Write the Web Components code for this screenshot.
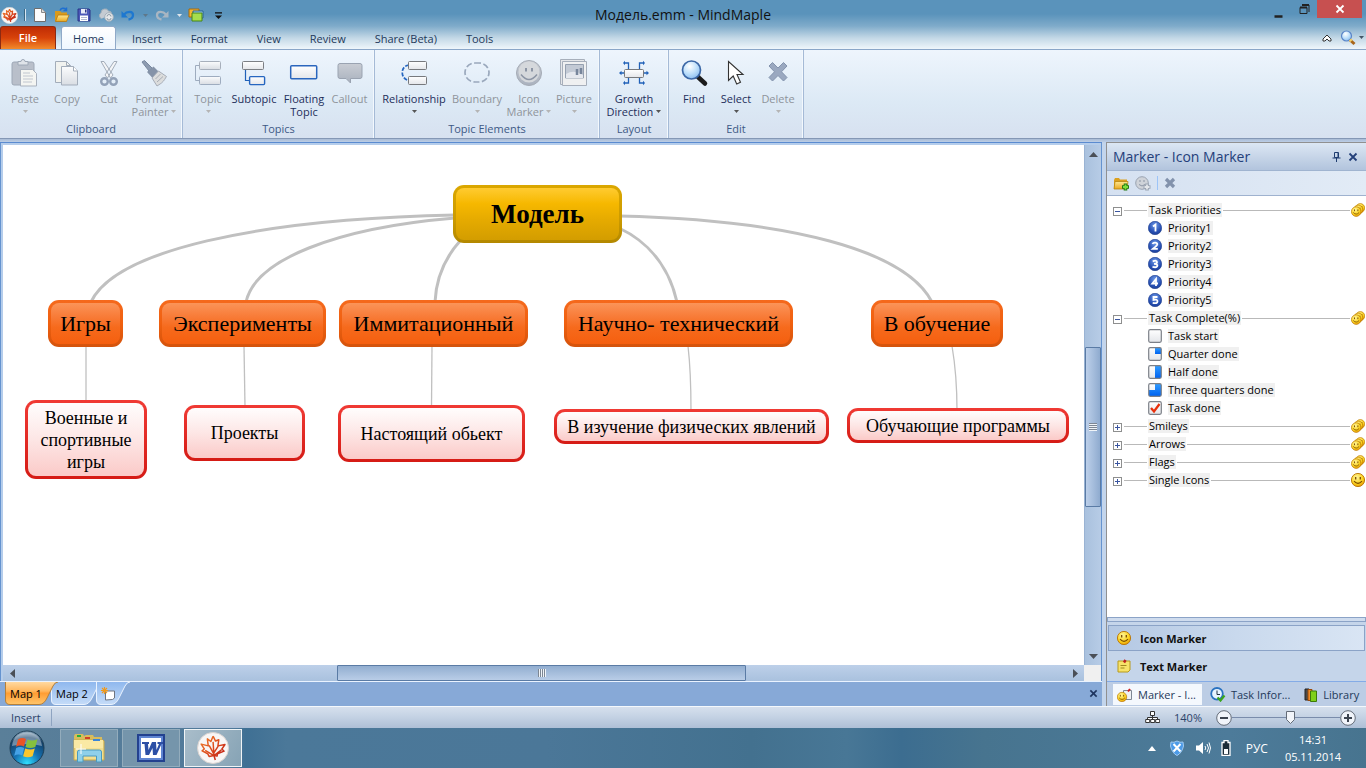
<!DOCTYPE html>
<html lang="ru">
<head>
<meta charset="utf-8">
<title>Модель.emm - MindMaple</title>
<style>
  html, body { margin: 0; height: 100%; }
  body { font: 11px/13px "Open Sans", "Noto Sans", sans-serif; color: #1e395b; overflow: hidden; }
</style>
</head>
<body>
<mm-app></mm-app>

<script>
const define = (name, html, setup) => {
  const tpl = document.createElement('template');
  tpl.innerHTML = html;
  customElements.define(name, class extends HTMLElement {
    constructor() {
      super();
      this.attachShadow({ mode: 'open' }).append(tpl.content.cloneNode(true));
    }
    connectedCallback() {
      if (setup && !this.ready) { this.ready = true; setup(this, this.shadowRoot); }
    }
  });
};

/* ---------- icons ---------- */
const DEFS = `<defs>
<linearGradient id="gy" x2="0" y2="1"><stop stop-color="#fbfcfd"/><stop offset="1" stop-color="#d9dde3"/></linearGradient>
<linearGradient id="wh" x2="0" y2="1"><stop stop-color="#fff"/><stop offset="1" stop-color="#e4e6ea"/></linearGradient>
<linearGradient id="gr" x2="0" y2="1"><stop stop-color="#c9cdd4"/><stop offset="1" stop-color="#a9b1be"/></linearGradient>
<linearGradient id="fo" x2="0" y2="1"><stop stop-color="#ffe892"/><stop offset="1" stop-color="#e9a820"/></linearGradient>
<linearGradient id="bl" x2="0" y2="1"><stop stop-color="#2f9bff"/><stop offset="1" stop-color="#0062f0"/></linearGradient>
<linearGradient id="lf" x2="1" y2="1"><stop stop-color="#f0802a"/><stop offset=".5" stop-color="#dc4a1c"/><stop offset="1" stop-color="#b81414"/></linearGradient>
<radialGradient id="sm" cx=".4" cy=".3" r=".8"><stop stop-color="#fff59a"/><stop offset=".6" stop-color="#fbd11c"/><stop offset="1" stop-color="#e08a00"/></radialGradient>
<radialGradient id="nb" cx=".5" cy=".3" r=".8"><stop stop-color="#6f9be8"/><stop offset=".6" stop-color="#2750b4"/><stop offset="1" stop-color="#1b3a8c"/></radialGradient>
<radialGradient id="ln" cx=".4" cy=".3" r=".8"><stop stop-color="#fff"/><stop offset=".5" stop-color="#bfe0fb"/><stop offset="1" stop-color="#7fb6ee"/></radialGradient>
<radialGradient id="or" cx=".5" cy=".95" r=".95"><stop stop-color="#2fe0ff"/><stop offset=".4" stop-color="#1673b4"/><stop offset=".8" stop-color="#123e66"/><stop offset="1" stop-color="#9fb8ca"/></radialGradient>
</defs>`;
const smile = (x, y, r) => `<g transform="translate(${x} ${y}) scale(${r / 7})"><circle r="6.6" fill="url(#sm)" stroke="#b97400" stroke-width="0.9"/><path d="M-2.3-3v2.4M2.3-3v2.4" stroke="#7a4a00" stroke-width="1.3"/><path d="M-4 1.2Q0 5.6 4 1.2" fill="none" stroke="#7a4a00" stroke-width="1.1"/></g>`;
const leaf = w => `<path d="M16 2.500L18.800 8 22.500 6.500 21.500 13.500 29.500 12 26 17 28.500 19.500 21 22.500 20.500 25 17 24.500 18.500 29.500M16 2.500L13.500 8.500 9.500 5.500 10.500 13.500 2.500 11.500 6 17 3.500 19 10 22.500 11.500 25.500 17 24.500M17 24.500L16 9M16.500 22L11.500 13M16.500 22L22 13.500M17 24.500L7 18.500M17 24.500L25.500 18" fill="none" stroke="url(#lf)" stroke-width="${w}" stroke-linejoin="round"/>`;
const num = d => `<circle cx="7" cy="7" r="6.700" fill="url(#nb)" stroke="#1b3a8c" stroke-width=".6"/><path d="${d}" fill="none" stroke="#fff" stroke-width="1.800"/>`;
const box = i => `<rect x=".7" y=".7" width="12.600" height="12.600" rx="1.500" fill="url(#wh)"/>${i}<rect x=".7" y=".7" width="12.600" height="12.600" rx="1.500" fill="none" stroke="#7c8088" stroke-width="1.200"/>`;
const disc = '<circle cx="16" cy="16" r="15.500" fill="#f8f6f5" stroke="#d9d3d0"/>';
const ICONS = {
  leaf: [32, 32, disc + `<g transform="translate(2 2) scale(.88)">${leaf(1.7)}</g>`],
  logo: [32, 32, disc + `<g transform="translate(2 2) scale(.88)">${leaf(2.6)}</g>`],
  newdoc: [14, 16, `<path d="M1.500 1.500h7l4 4v9h-11z" fill="#fcfcfc" stroke="#6d6d6d"/><path d="M8.500 1.500v4h4" fill="#ddd" stroke="#888"/>`],
  open: [16, 16, `<path d="M1 14V4h5l1.500 1.500H13V14z" fill="#d99a1c"/><path d="M1.500 14.500L4 8h11l-2.500 6.500z" fill="url(#fo)" stroke="#b8780c" stroke-width=".8"/><path d="M6 3.500C7 1 10 .5 12 2.500M12.500 .5v3h-3" fill="none" stroke="#1f6fd0" stroke-width="1.500"/>`],
  save: [14, 14, `<path d="M1 1h11l1 1v11H1z" fill="#4b58b8" stroke="#2a3488"/><path d="M4 1h6v4.500H4z" fill="#e8ecf8"/><path d="M8 1.500h1.500V4.500H8z" fill="#2a3488"/><path d="M3 7.500h8V13H3z" fill="#fff"/><path d="M4 9.500h6M4 11.500h6" stroke="#9aa6c8" stroke-width=".8"/>`],
  cloud: [16, 14, `<path d="M4 10.500H3.500A3 3 0 0 1 3 5 4 4 0 0 1 10.500 3a3 3 0 0 1 3 3" fill="#c5cbd2" stroke="#a3b0bb"/><circle cx="11" cy="9" r="4.300" fill="#e6e8ea" stroke="#a3b0bb"/><path d="M9 8.500a2 2 0 0 1 4 0M13 10a2 2 0 0 1-4 0" fill="none" stroke="#8e9ba7"/>`],
  undo: [14, 12, `<path d="M3 5.500C6 2 12 2 12 6c0 3-2 4-4.500 4.500" fill="none" stroke="#1e78d0" stroke-width="2.300"/><path d="M.5 2v6.500H7z" fill="#1e78d0"/>`],
  redo: [14, 12, `<path d="M11 5.500C8 2 2 2 2 6c0 3 2 4 4.500 4.500" fill="none" stroke="#a9b6c2" stroke-width="2.300"/><path d="M13.500 2v6.500H7z" fill="#a9b6c2"/>`],
  layers: [16, 14, `<path d="M1 1h10v8H1z" fill="#f5b431" stroke="#a56a0e"/><path d="M5 3h10v7H5z" fill="#9fd0ef" stroke="#28648f"/><path d="M4 5h10v8H4z" fill="#a6dd4d" stroke="#47861b"/>`],
  down: [7, 4, `<path d="M0 0h7L3.500 4z" fill="currentColor"/>`],
  more: [8, 8, `<path d="M0 1h8" stroke="#111" stroke-width="1.500"/><path d="M0 4h8L4 8z" fill="#111"/>`],
  min: [9, 3, `<path d="M.5 1.500h8" stroke="#222" stroke-width="2.500"/>`],
  restore: [11, 11, `<path d="M3 1h7v7M1 3.500h7V9.500H1z" fill="none" stroke="#222"/><path d="M1 3.500h7M3 1h7" stroke="#222" stroke-width="2"/>`],
  close: [10, 10, `<path d="M1.500 1.500l7 7m0-7l-7 7" stroke="currentColor" stroke-width="1.800"/>`],
  chev: [10, 8, `<path d="M1 5l4-4 4 4v2H7L5 5 3 7H1z" fill="#fff" stroke="#333"/>`],
  find: [16, 16, `<circle cx="6.500" cy="6" r="5" fill="url(#ln)" stroke="#5b86c8" stroke-width="1.200"/><path d="M10 10l4.500 4" stroke="#a8651a" stroke-width="3"/><path d="M10 9.500l1.500 1.500" stroke="#f2d16a" stroke-width="3"/>`],
  paste: [30, 30, `<rect x="2" y="3" width="22" height="23" rx="2" fill="#b9bfca" stroke="#9ea8b6"/><path d="M8 5V2.500h3a2 2 0 0 1 4 0h3V6H8z" fill="#dfe3e9" stroke="#9ea8b6"/><path d="M10.500 10.500h12l4 4V27h-16z" fill="#f4f5f2" stroke="#a9b1bd"/><path d="M13 14h7M13 17h10M13 20h10M13 23h9" stroke="#c0c6cf"/>`],
  copy: [30, 30, `<path d="M3.500 2.500h11l4 4v17h-15z" fill="#f1f2ef" stroke="#a3adba"/><path d="M14.500 2.500v4h4" fill="none" stroke="#a3adba"/><path d="M9.500 7.500h12l4 4.500v14h-16z" fill="url(#gy)" stroke="#a3adba"/><path d="M21.500 7.500V12h4" fill="#fff" stroke="#a3adba"/>`],
  cut: [30, 30, `<path d="M7 2.500l9.500 16.500 2.500-3L10 2.500zM23 2.500l-9.500 16.500-2.500-3L20 2.500z" fill="#f4f5f7" stroke="#a3adba"/><circle cx="10.500" cy="22.500" r="3.300" fill="none" stroke="#93a2b8" stroke-width="2.400"/><circle cx="19.500" cy="22.500" r="3.300" fill="none" stroke="#93a2b8" stroke-width="2.400"/>`],
  brush: [30, 30, `<path d="M3 3l2.500-1.500L13 9l-3 3z" fill="#8d9bb0" stroke="#7888a0"/><path d="M8 13l6.500-5.500 5 5-6 6.500z" fill="#8593a8"/><path d="M13 19l6.500-7 8 5.500c-1.500 2-2 4-5 6.500-2 1.500-3 2-4.500 3z" fill="#dcdddd" stroke="#a6adb8"/><path d="M16.500 20l5-5M18 23l6-5.500" stroke="#a9aeb6"/>`],
  topic: [30, 30, `<path d="M7 6.500H2.500v15H7" fill="none" stroke="#9eacbf"/><rect x="6.500" y="2.500" width="21" height="8" rx="1" fill="url(#gy)" stroke="#a7afbb"/><rect x="6.500" y="17.500" width="21" height="8" rx="1" fill="url(#gy)" stroke="#9eacbf"/>`],
  subtopic: [30, 30, `<path d="M6.500 11v10.500H10" fill="none" stroke="#2161b8" stroke-width="1.200"/><rect x="3.500" y="2.500" width="21" height="8" rx="1" fill="url(#wh)" stroke="#7c7f84"/><rect x="10.600" y="17.600" width="15" height="8" rx="1" fill="url(#wh)" stroke="#2666c0" stroke-width="1.400"/>`],
  floating: [30, 30, `<rect x="1.700" y="6.700" width="26" height="13" rx="1" fill="url(#wh)" stroke="#2b66bd" stroke-width="1.500"/>`],
  callout: [30, 30, `<path d="M5 4.500h20a2 2 0 0 1 2 2v11a2 2 0 0 1-2 2h-9.500v4.500L11 19.500H5a2 2 0 0 1-2-2v-11a2 2 0 0 1 2-2z" fill="url(#gr)" stroke="#9aa3b1"/>`],
  relationship: [30, 30, `<path d="M10 6C1 7 1 20 10 21.500" fill="none" stroke="#2666c0" stroke-width="1.700" stroke-dasharray="4 1.500"/><rect x="9.500" y="2.500" width="18" height="8" rx="1" fill="url(#wh)" stroke="#77797d"/><rect x="9.500" y="17.500" width="18" height="8" rx="1" fill="url(#wh)" stroke="#77797d"/>`],
  boundary: [30, 30, `<rect x="3" y="4" width="24" height="19" rx="10" fill="none" stroke="#9aa8bc" stroke-width="1.700" stroke-dasharray="6 2.500"/>`],
  smiley: [30, 30, `<circle cx="15" cy="14" r="12.500" fill="url(#gr)" stroke="#a5abb5"/><circle cx="15" cy="13" r="10.500" fill="#d5d8dc"/><path d="M12 9v3.500M18 9v3.500" stroke="#8c95a5" stroke-width="2"/><path d="M7 15.500q8 10 16 0" fill="none" stroke="#8c95a5" stroke-width="1.500"/>`],
  picture: [30, 30, `<path d="M1.500.5h24v25h-24z" fill="#e5e7ea" stroke="#a7afbb"/><path d="M3.500 2.500h24v24h-24z" fill="#eff0f1" stroke="#a7afbb"/><path d="M6.500 5.500h18V19h-18z" fill="#c3cad5" stroke="#95a0b0"/><path d="M7 15q8-5 17 1v3H7z" fill="#e5e8ee"/><path d="M18 10v6M22 9v6" stroke="#77859b" stroke-width="2.500"/>`],
  growth: [32, 30, `<path d="M10.500 10V4H6M21.500 10V4H26M10.500 19v5H6M21.500 19v5H26M6 14H2M26 14h4" fill="none" stroke="#2161b8" stroke-width="1.300"/><path d="M7 1.800L5 4l2 2.200zM25 1.800L27 4l-2 2.200zM7 21.800L5 24l2 2.200zM25 21.800l2 2.200-2 2.200zM3.500 11.800L1 14l2.500 2.200zM28.500 11.800L31 14l-2.500 2.200z" fill="#2161b8"/><rect x="6.500" y="10.500" width="19" height="8" rx="1" fill="url(#wh)" stroke="#77797d"/>`],
  bigfind: [30, 30, `<path d="M19 18l7 6.500" stroke="#1b1b1b" stroke-width="4.500" stroke-linecap="round"/><circle cx="12.500" cy="11" r="9" fill="url(#ln)" stroke="#3b67a6" stroke-width="1.700"/>`],
  select: [30, 30, `<path d="M7.500 2.500v19l4.700-4.500 3.500 8 3.800-1.700-3.500-7.800h6z" fill="#fff" stroke="#333" stroke-width="1.100"/>`],
  delete: [30, 30, `<path d="M6 7l3.500-3.500L15 9l5.500-5.500L24 7l-5.500 5.800L24 18.500 20.500 22 15 16.500 9.500 22 6 18.500l5.500-5.700z" fill="#9aa8c0" stroke="#8393ad"/>`],
  pin: [9, 10, `<path d="M2.500.5h4v5h-4zM.5 6h8M4.500 6V10" fill="none" stroke="#1f3d70"/><path d="M6 1v4.500" stroke="#1f3d70"/>`],
  addfolder: [17, 15, `<path d="M1 13V4l1-2h4l1 1.500h7V13z" fill="#dba01f"/><path d="M1 13l1-7.500h13L14 13z" fill="url(#fo)" stroke="#b8850c" stroke-width=".8"/><path d="M12.500 7.500v7M9 11h7" stroke="#237a12" stroke-width="3.600"/><path d="M12.500 8.500v5M10 11h5" stroke="#7ede3c" stroke-width="1.800"/>`],
  addsmile: [17, 15, `<circle cx="7" cy="7" r="6.300" fill="#cfd3d9" stroke="#9aa3b1"/><path d="M5 4v2M9 4v2M4 8.500q3 3 6 0" fill="none" stroke="#8c95a5"/><path d="M12 7.500v7M8.500 11h7" stroke="#9aa3b1" stroke-width="3.600"/><path d="M12 8.500v5M9.500 11h5" stroke="#e3e6ea" stroke-width="1.800"/>`],
  graydel: [12, 12, `<path d="M2 2l8 8m0-8l-8 8" stroke="#8292ac" stroke-width="3.200"/>`],
  n1: [14, 14, num('M5 5.500L7.500 3.500V10.500')],
  n2: [14, 14, num('M4.500 5Q5 3.700 7 3.700 9.300 3.700 9.300 5.300 9.300 6.500 5 9.800H9.800')],
  n3: [14, 14, num('M4.700 4.300Q9 2.800 9 5.200 9 6.800 6 6.800 9.400 6.800 9.400 8.600 9.400 11 4.500 9.900')],
  n4: [14, 14, num('M8 11V4L4.300 8.500H10')],
  n5: [14, 14, num('M9.500 4H5.500V6.800Q9.500 6 9.500 8.300 9.500 11 4.700 9.900')],
  b0: [14, 14, box('')],
  b1: [14, 14, box('<path d="M7 1h6v6H7z" fill="url(#bl)"/>')],
  b2: [14, 14, box('<path d="M7 1h6v12H7z" fill="url(#bl)"/>')],
  b3: [14, 14, box('<path d="M7 1h6v12H1V7h6z" fill="url(#bl)"/>')],
  b4: [14, 14, box('<path d="M3 7l3 3.500L11.500 3" fill="none" stroke="#e8300c" stroke-width="2.300"/>')],
  smile: [14, 14, smile(7, 7, 7)],
  smiles: [14, 14, smile(9.300, 5, 4.700) + smile(7.300, 6.700, 4.900) + smile(5.200, 8.600, 5.100)],
  note: [14, 14, `<path d="M1 2h12v9l-2 2H1z" fill="#f7e36a" stroke="#b79a1c"/><path d="M3.500 6.500h6M3.500 9h4" stroke="#a08a20"/><path d="M7 3.500L8.500 1" stroke="#c02020" stroke-width="2.500"/>`],
  marker: [16, 14, `<path d="M6.500 2.500h8v9h-8z" fill="#eef1f5" stroke="#7d8794"/><path d="M11 3.500L13 1" stroke="#d02020" stroke-width="2"/>${smile(5, 9, 5)}`],
  clock: [16, 15, `<circle cx="7" cy="6.800" r="5.800" fill="#e8f4ff" stroke="#2a72c0" stroke-width="1.800"/><path d="M7 3.500V7.500h3" fill="none" stroke="#234"/><path d="M7.500 10.500l3 3 4-5" fill="none" stroke="#3aa51c" stroke-width="2.200"/>`],
  books: [14, 14, `<path d="M1 1h4v11H1z" fill="#4a4a4a" stroke="#222"/><path d="M4 1.500h4v11H4z" fill="#f08a28" stroke="#9a4a08"/><path d="M6.500 3h6v10.500h-6z" fill="#7fd018" stroke="#3b7a08"/>`],
  newmap: [16, 14, `<path d="M4.500 4h9v7l-2 1.500-7 .5z" fill="#fff" stroke="#6e7480"/><path d="M3.500 0v7M0 3.500h7M1 1l5 5M6 1L1 6" stroke="#f09a1c" stroke-width="1.100"/>`],
  hier: [15, 13, `<path d="M5.500.5h4v4h-4zM.7 8.500h4v3h-4zM5.700 8.500h4v3h-4zM10.700 8.500h4v3h-4zM7.500 4.500v4M2.500 8.500v-2h10v2" fill="#fff" stroke="#333"/>`],
  minus: [16, 16, `<circle cx="8" cy="8" r="7.300" fill="#f0f4fa" stroke="#646c78"/><path d="M4 8h8" stroke="#3c4450" stroke-width="2"/>`],
  plus: [16, 16, `<circle cx="8" cy="8" r="7.300" fill="#f0f4fa" stroke="#646c78"/><path d="M4 8h8M8 4v8" stroke="#3c4450" stroke-width="2"/>`],
  start: [36, 36, `<circle cx="18" cy="18" r="17" fill="url(#or)" stroke="#1c3d55"/><path d="M3 16C4 6 11 2.500 18 2.500S32 6 33 16Q18 12 3 16z" fill="#fff" opacity=".38"/><path d="M9 9.500q4-2.500 8-.5l-2 7.500q-4-2-8 .3z" fill="#ea5426"/><path d="M18.500 9.500q4.500 2 10-.3l-2.200 7.800q-5.400 2-9.800 0z" fill="#86c13e"/><path d="M7.200 18q4-2 8 0l-2 7.500q-4-2-8 .3z" fill="#45a2e6"/><path d="M16.200 18.500q5.400 2 9.600 0l-2.200 7.800q-4.800 2-9.500 0z" fill="#fbc62c"/>`],
  explorer: [32, 32, `<path d="M1 27V4l1-2h8l1 2 2-1h7l1 2h8v4h2v18z" fill="#d8bc5c"/><path d="M1 28V8h29l1 1v19z" fill="#f3df90" stroke="#c9a94a"/><path d="M1 8h29v8H1z" fill="#fae9a4"/><path d="M4 3h4v2H4z" fill="#26b03a"/><path d="M12 5h5v2h-5z" fill="#d04028"/><path d="M20 7h7v2h-7z" fill="#3a86d8"/><path d="M4.500 30V20q0-2 2-2h20q2 0 2 2v10h-5v-6H10v6z" fill="#8fd0ea" stroke="#4a9ac0"/><path d="M8 12v10M3 17h10" stroke="#fff"/>`],
  word: [28, 28, `<path d="M1 1h26v26H1z" fill="#5f85d2" stroke="#23418f" stroke-width="2"/><path d="M4 4h20v20H4z" fill="#fff"/><path d="M5 8h7v2h-1l.5 6L15 8h4l.5 8L22 10h-1.500V8H26v2h-1.500L19.500 21H16l-.5-7L12 21H8.500L7.500 10H5z" fill="#2c4fa5"/>`],
  up: [8, 5, `<path d="M0 5h8L4 0z" fill="#fff"/>`],
  shield: [16, 16, `<path d="M2 2q3 1 6-1 3 2 6 1l.500 4q-1.500 7-6.500 9.500Q3 13 1.500 6z" fill="#4c9be8" stroke="#9fcaf2"/><path d="M4.500 4l7 7.500M11.500 4l-7 7.500" stroke="#fff" stroke-width="2"/>`],
  sound: [16, 14, `<path d="M1 4.500h3L8 1v12L4 9.500H1z" fill="#fff"/><path d="M10 5q1.500 2 0 4M12 3q3 4 0 8M14 1.500q3 5.500 0 11" fill="none" stroke="#fff"/>`],
  battery: [10, 16, `<path d="M3 .5h4v2h2v13H1v-13h2z" fill="#1c2c38" stroke="#fff" stroke-width="1.300"/><path d="M3 9h4v5H3z" fill="#fff"/>`],
  left: [5, 9, `<path d="M5 0v9L0 4.500z" fill="#4a4f57"/>`],
  right: [5, 9, `<path d="M0 0v9l5-4.500z" fill="#4a4f57"/>`],
  sup: [9, 5, `<path d="M0 5h9L4.500 0z" fill="#4a4f57"/>`],
  sdown: [9, 5, `<path d="M0 0h9L4.500 5z" fill="#4a4f57"/>`]
};
define('mm-icon', `<style>:host{display:block;flex:none}svg{display:block}</style>`, (el, root) => {
  const [w, h, body] = ICONS[el.getAttribute('name')];
  const s = +(el.getAttribute('height') || h);
  root.innerHTML += `<svg width="${Math.round(w * s / h)}" height="${s}" viewBox="0 0 ${w} ${h}" aria-hidden="true">${DEFS}${body}</svg>`;
});

/* ---------- title bar ---------- */
define('mm-title-bar', `<style>
:host{display:grid;grid-template-columns:1fr auto 1fr;height:26px;color:#111}
.quick{display:flex;align-items:center;gap:6px;padding-left:1px}
.sep{width:1px;height:12px;background:#d7e6f2;border-left:1px solid #3a6784}
.title{font-size:14px;line-height:30px;margin:0;font-weight:400}
.win{display:flex;justify-content:flex-end;align-items:flex-start;padding-right:4px}
button{font:inherit;border:0;background:none;padding:0;height:18px;display:grid;place-items:center}
.quick button{height:26px;width:16px}
.quick .dd{color:#5f7788;width:6px}
.quick .light{color:#dfe6ec}
.win button{width:26px}
.win .low{align-items:end}
.win .x{width:45px;background:#c75050;color:#fff}
</style>
<div class="quick">
<mm-icon name="logo" height="17"></mm-icon><span class="sep"></span>
<button aria-label="New"><mm-icon name="newdoc"></mm-icon></button>
<button aria-label="Open"><mm-icon name="open"></mm-icon></button>
<button aria-label="Save"><mm-icon name="save"></mm-icon></button>
<button aria-label="Sync"><mm-icon name="cloud"></mm-icon></button>
<button aria-label="Undo"><mm-icon name="undo"></mm-icon></button>
<button class="dd" aria-label="Undo list"><mm-icon name="down" height="3"></mm-icon></button>
<button aria-label="Redo"><mm-icon name="redo"></mm-icon></button>
<button class="dd light" aria-label="Redo list"><mm-icon name="down" height="3"></mm-icon></button>
<button aria-label="Layers"><mm-icon name="layers"></mm-icon></button>
<button aria-label="Customize"><mm-icon name="more" height="7"></mm-icon></button>
</div>
<h1 class="title">Модель.emm - MindMaple</h1>
<div class="win">
<button class="low" aria-label="Minimize"><mm-icon name="min"></mm-icon></button>
<button aria-label="Restore"><mm-icon name="restore"></mm-icon></button>
<button class="x" aria-label="Close"><mm-icon name="close"></mm-icon></button>
</div>`);

/* ---------- ribbon ---------- */
define('mm-tabs', `<style>
:host{display:flex;height:23px;gap:3px;align-items:stretch}
button{font:inherit;color:#1e395b;border:0;background:none;padding:0 13px;line-height:26px}
.file{width:56px;color:#fff;font-weight:600;background:linear-gradient(#bf2c05,#d8430a 50%,#f28a2a);border:1px solid #8c2a12;border-bottom:0;border-radius:3px 3px 0 0;margin-right:2px;line-height:22px;padding:0}
.on{width:55px;background:linear-gradient(#fff,#eef6fe);border:1px solid #8fa9c8;border-bottom:0;border-radius:3px 3px 0 0;padding:0;height:24px;line-height:24px}
.right{margin-left:auto;display:flex;align-items:center;padding-right:2px;gap:3px;color:#456}
.right button{padding:0 5px}
</style>
<button class="file">File</button><button class="on">Home</button><button>Insert</button><button>Format</button><button>View</button><button>Review</button><button>Share (Beta)</button><button>Tools</button>
<div class="right"><button aria-label="Collapse ribbon"><mm-icon name="chev"></mm-icon></button><mm-icon name="find"></mm-icon><mm-icon name="down" height="3"></mm-icon></div>`);

define('mm-ribbon', `<style>
:host{display:flex;height:88px;border-top:1px solid #8aa6c8;border-bottom:1px solid #8497b5;box-sizing:content-box;background:linear-gradient(#eef5fd,#dce9f5 60%,#d7e1f0)}
</style><slot></slot>`);

define('mm-group', `<style>
:host{display:flex;flex-direction:column;border-right:1px solid #a5bad6;box-shadow:inset -1px 0 #f3f8fd}
.row{display:flex;flex:1;padding:0 4px}
.name{text-align:center;height:18px;line-height:17px;color:#3e5a86}
</style><div class="row"><slot></slot></div><div class="name"></div>`,
(el, r) => { r.querySelector('.name').textContent = el.getAttribute('label'); });

define('mm-button', `<style>
:host{display:block}
button{font:inherit;color:#1e2f5b;border:0;background:none;padding:9px 0 0;width:100%;height:100%;display:flex;flex-direction:column;align-items:center}
:host([off]) button{color:#8f949b}
.t{margin-top:3px;text-align:center;white-space:pre}
.l2{display:flex;align-items:center;gap:3px;white-space:pre;height:13px}
mm-icon[name=down]{color:#555}
:host([off]) mm-icon[name=down]{color:#b4b4b4}
</style><button></button>`, (el, r) => {
  const [a, b] = el.getAttribute('label').split('|');
  const btn = r.querySelector('button');
  if (el.hasAttribute('off')) btn.disabled = true;
  el.style.width = el.getAttribute('w') + 'px';
  btn.innerHTML = `<mm-icon name="${el.getAttribute('icon')}"></mm-icon><span class="t">${a}</span><span class="l2">${b ? `<span>${b}</span>` : ''}${el.hasAttribute('menu') ? '<mm-icon name="down" height="3"></mm-icon>' : ''}</span>`;
});

/* ---------- mind map ---------- */
define('mm-node', `<style>
:host{position:absolute;box-sizing:border-box;display:flex;align-items:center;justify-content:center;text-align:center;white-space:pre;color:#000;border:3px solid transparent;border-radius:11px;font:18px/22px "Liberation Serif","Times New Roman",serif;
background:linear-gradient(#fffdfd,#fde6e5 50%,#fbcac8) padding-box,linear-gradient(#f03a34,#d51b15) border-box}
:host([level="1"]){font-size:22px;background:linear-gradient(#fb9458,#f87a36 35%,#f66a1c 60%,#f55f0f) padding-box,linear-gradient(#f5691c,#f0600f 50%,#d4530c) border-box}
:host([level="0"]){font-size:27px;font-weight:700;background:linear-gradient(#ffcb31,#f6b800 30%,#e6ab00 60%,#d39d00) padding-box,linear-gradient(#dba700,#cb9a00 60%,#b38800) border-box}
</style><slot></slot>`, el => {
  const [x, y, w, h] = el.getAttribute('at').split(' ');
  Object.assign(el.style, { left: x + 'px', top: y + 'px', width: w + 'px', height: h + 'px' });
});

define('mm-map', `<style>
:host{display:block;position:relative;overflow:hidden;background:#fff}
svg{position:absolute;left:0;top:0}
</style>
<svg width="1081" height="519" viewBox="3 145 1081 519" fill="none" stroke="#c0c0c0" aria-hidden="true">
<g stroke-width="3"><path d="M455 215C255 219 115 251 91 302"/><path d="M455 218C335 228 255 260 246 302"/><path d="M460 241C443 260 436 280 435 302"/><path d="M619 228C655 245 671 275 677 302"/><path d="M619 216C790 220 905 250 932 302"/></g>
<g stroke-width="1.300"><path d="M86 346V402"/><path d="M244 346L245 407"/><path d="M432 346L431.500 407"/><path d="M688 346Q691 372 691 411"/><path d="M952 346Q957 375 957 411"/></g>
</svg>
<mm-node level="0" at="450 40 169 58">Модель</mm-node>
<mm-node level="1" at="45 155 75 47">Игры</mm-node>
<mm-node level="1" at="156 155 167 47">Эксперименты</mm-node>
<mm-node level="1" at="336 155 189 47">Иммитационный</mm-node>
<mm-node level="1" at="561 155 229 47">Научно- технический</mm-node>
<mm-node level="1" at="868 155 132 47">В обучение</mm-node>
<mm-node at="22 255 122 79">Военные и
спортивные
игры</mm-node>
<mm-node at="181 260 121 56">Проекты</mm-node>
<mm-node at="335 260 187 57">Настоящий обьект</mm-node>
<mm-node at="551 264 275 35">В изучение физических явлений</mm-node>
<mm-node at="844 263 222 35">Обучающие программы</mm-node>`);

define('mm-scroll', `<style>
:host{display:flex;background:linear-gradient(#bdd0e9,#a9c1de)}
:host([dir=v]){flex-direction:column;background:linear-gradient(90deg,#a9c1de,#b7cce6)}
span{display:grid;place-items:center;width:18px;height:16px}
:host([dir=v]) span{width:16px;height:18px}
.thumb{box-sizing:border-box;border:1px solid #5a7ba5;border-radius:1px;background:linear-gradient(#92aed0,#b9cde7);display:grid;place-items:center}
:host([dir=v]) .thumb{background:linear-gradient(90deg,#bdd0ea,#8fabcf)}
i{width:8px;height:8px;background:repeating-linear-gradient(90deg,#7d8794 0 1px,#f0f4f8 1px 2px)}
:host([dir=v]) i{background:repeating-linear-gradient(#7d8794 0 1px,#f0f4f8 1px 2px)}
</style><span class="a"></span><div class="pre"></div><div class="thumb"><i></i></div><div class="post"></div><span class="b"></span>`, (el, r) => {
  const v = el.getAttribute('dir') === 'v';
  const [p, t, q] = el.getAttribute('parts').split(' ');
  r.querySelector('.a').innerHTML = `<mm-icon name="${v ? 'sup' : 'left'}"></mm-icon>`;
  r.querySelector('.b').innerHTML = `<mm-icon name="${v ? 'sdown' : 'right'}"></mm-icon>`;
  r.querySelector('.pre').style.flex = p + ' 0 0';
  r.querySelector('.thumb').style.flex = t + ' 0 0';
  r.querySelector('.post').style.flex = q + ' 0 0';
});

define('mm-map-tab', `<style>
:host{display:block;position:relative;height:23px;margin-right:-7px}
:host([on]){z-index:2}
svg{position:absolute;left:0;top:0}
button{position:relative;font:inherit;font-size:11px;color:#000;border:0;background:none;padding:0 0 0 5px;height:23px;width:100%;text-align:left}
</style><svg height="24" aria-hidden="true"></svg><button><slot></slot></button>`, (el, r) => {
  const w = +el.getAttribute('w'), on = el.hasAttribute('on');
  el.style.width = w + 'px';
  const svg = r.querySelector('svg');
  svg.setAttribute('width', w);
  svg.innerHTML = `<defs><linearGradient id="f" x2="0" y2="1">${on ? '<stop stop-color="#ffd9a0"/><stop offset=".4" stop-color="#ffb75e"/><stop offset=".5" stop-color="#ff9d33"/><stop offset="1" stop-color="#ffc66c"/>' : '<stop stop-color="#8fb8ee"/><stop offset="1" stop-color="#c5dcf8"/>'}</linearGradient></defs><path d="M.5 0V18Q.5 22.500 5 22.500H${w - 19}Q${w - 14} 22.500 ${w - 11} 16L${w - 5} 4Q${w - 3} 0 ${w} 0" fill="url(#f)" stroke="${on ? '#b5803a' : '#eaf3ff'}"/>`;
});

define('mm-workspace', `<style>
:host{display:flex;flex-direction:column;border-top:1px solid #5b8bd0;min-width:0}
.frame{flex:1;display:grid;grid-template-columns:minmax(0,1fr) 17px;grid-template-rows:minmax(0,1fr) 16px;border-left:1px solid #6593cf;border-right:1px solid #6593cf;padding:2px 0 0 2px;background:#b5cdeb}
mm-scroll[dir=v]{border-left:1px solid #9ab3d3}
.corner{background:#f0f0f0}
.tabs{display:flex;height:24px;background:#87a9d7;border-top:1px solid #eaf3ff;padding-left:5px;align-items:flex-start}
.close{font:inherit;margin-left:auto;border:0;background:none;color:#1e3560;padding:7px 4px}
</style>
<div class="frame"><mm-map></mm-map><mm-scroll dir="v" parts="185 159 141"></mm-scroll><mm-scroll dir="h" parts="317 407 321"></mm-scroll><div class="corner"></div></div>
<div class="tabs"><mm-map-tab w="53" on>Map 1</mm-map-tab><mm-map-tab w="52">Map 2</mm-map-tab><mm-map-tab w="34"><mm-icon name="newmap"></mm-icon></mm-map-tab><button class="close" aria-label="Close map"><mm-icon name="close" height="9"></mm-icon></button></div>`);

/* ---------- marker panel ---------- */
define('mm-tree-group', `<style>
:host{display:block;color:#000}
.h{display:flex;align-items:center;height:18px;padding:0 1px 0 6px}
button{box-sizing:border-box;width:9px;height:9px;padding:0;border:1px solid #8e8f8f;background:linear-gradient(#3a55a0,#3a55a0) center/5px 1px no-repeat,#fff;margin:2px 2px 0 0}
:host([closed]) button{background:linear-gradient(#3a55a0,#3a55a0) center/5px 1px no-repeat,linear-gradient(#3a55a0,#3a55a0) center/1px 5px no-repeat,#fff}
hr{border:0;height:1px;background:#b9b9b9;margin:0;width:23px}
hr.r{flex:1;margin:0 1px}
span{background:#f0f0f0;line-height:14px;padding:0 1px;margin-left:1px}
</style><div class="h"><button aria-label="Toggle group"></button><hr><span></span><hr class="r"><mm-icon name="smiles"></mm-icon></div><slot></slot>`, (el, r) => {
  r.querySelector('span').textContent = el.getAttribute('label');
  if (el.hasAttribute('single')) { const i = document.createElement('mm-icon'); i.setAttribute('name', 'smile'); r.querySelector('mm-icon').replaceWith(i); }
});

define('mm-row', `<style>
:host{display:flex;align-items:center;height:18px;padding-left:41px;gap:6px;color:#000}
span{background:#f0f0f0;line-height:14px;padding-right:1px}
</style><slot name="icon"></slot><span><slot></slot></span>`);

const row = (i, t) => `<mm-row><mm-icon slot="icon" name="${i}"></mm-icon>${t}</mm-row>`;
define('mm-panel', `<style>
:host{display:flex;flex-direction:column;box-sizing:border-box;border-left:1px solid #909090;border-top:1px solid #909090;background:#c5d5ea}
h2{margin:0;font-size:14px;font-weight:400;line-height:28px;height:27px;padding:0 8px 0 6px;display:flex;align-items:center;justify-content:space-between;color:#24407a;background:linear-gradient(#dce7f4,#c3d2e6 60%,#b2c4dd);border-bottom:1px solid #a0b4d0}
h2 div{display:flex;gap:7px;align-items:center}
button{font:inherit;color:inherit;border:0;background:none;padding:0}
.tools{display:flex;align-items:center;gap:5px;height:24px;padding-left:6px;background:linear-gradient(90deg,#d5e1f1,#e2ebf6);border-bottom:1px solid #9fb2cf}
.tools i{width:1px;height:14px;background:#9cc4f8;margin-right:1px}
.list{flex:1;background:#fff;padding:5px 0}
.split{height:3px;border:1px solid #8ba3c7;background:#cfdcee;margin-bottom:3px}
.cat{box-sizing:border-box;display:flex;align-items:center;gap:9px;height:30px;margin:0 1px 0;padding:0 8px;font-weight:700;color:#111;border:1px solid transparent}
.cat.on{height:26px;background:linear-gradient(90deg,#b4c8e3,#c9d9ed 50%,#d9e5f4);border-color:#8ba3c7}
.tabs{display:flex;height:21px;border-top:1px solid #84abe6;padding:2px 0 1px 6px;color:#1e395b;background:#bccde5}
.tabs button{display:flex;align-items:center;gap:5px;padding:0 11px 0 3px;white-space:nowrap}
.tabs button.on{background:#f4f8fd;margin-right:5px;padding:0 6px 0 4px}
</style>
<h2>Marker - Icon Marker<div><button aria-label="Pin"><mm-icon name="pin"></mm-icon></button><button aria-label="Close panel"><mm-icon name="close"></mm-icon></button></div></h2>
<div class="tools"><button aria-label="Add group"><mm-icon name="addfolder"></mm-icon></button><button aria-label="Add icon"><mm-icon name="addsmile"></mm-icon></button><i></i><button aria-label="Remove"><mm-icon name="graydel"></mm-icon></button></div>
<div class="list">
<mm-tree-group label="Task Priorities">${[1, 2, 3, 4, 5].map(n => row('n' + n, 'Priority' + n)).join('')}</mm-tree-group>
<mm-tree-group label="Task Complete(%)">${['Task start', 'Quarter done', 'Half done', 'Three quarters done', 'Task done'].map((t, n) => row('b' + n, t)).join('')}</mm-tree-group>
<mm-tree-group label="Smileys" closed></mm-tree-group><mm-tree-group label="Arrows" closed></mm-tree-group><mm-tree-group label="Flags" closed></mm-tree-group><mm-tree-group label="Single Icons" closed single></mm-tree-group>
</div>
<div class="split"></div>
<button class="cat on"><mm-icon name="smile"></mm-icon>Icon Marker</button>
<button class="cat"><mm-icon name="note"></mm-icon>Text Marker</button>
<div class="tabs"><button class="on"><mm-icon name="marker"></mm-icon>Marker - I...</button><button><mm-icon name="clock"></mm-icon>Task Infor...</button><button><mm-icon name="books"></mm-icon>Library</button></div>`);

/* ---------- status bar ---------- */
define('mm-status', `<style>
:host{display:flex;align-items:center;height:21px;border-top:1px solid #f4f8fc;background:linear-gradient(#d6e0ed,#c3d1e3 50%,#aebfd6);color:#2c4369}
.mode{padding:0 10px 0 11px;border-right:1px solid #8ea4c1;line-height:17px}
.zoom{margin-left:auto;display:flex;align-items:center;padding-right:10px}
output{margin:0 14px}
button{border:0;background:none;padding:0}
input{appearance:none;-webkit-appearance:none;width:108px;height:16px;margin:0;background:linear-gradient(#7a8cab,#7a8cab) center/100% 1px no-repeat}
input::-webkit-slider-thumb{-webkit-appearance:none;width:11px;height:13px;background:url('data:image/svg+xml,<svg xmlns="http://www.w3.org/2000/svg" width="11" height="13"><path d="M1.500.5h8v8l-4 4-4-4z" fill="%23f2f5fa" stroke="%23646c78"/></svg>') no-repeat}
</style><span class="mode">Insert</span>
<div class="zoom"><mm-icon name="hier"></mm-icon><output>140%</output><button aria-label="Zoom out"><mm-icon name="minus"></mm-icon></button><input type="range" aria-label="Zoom" min="0" max="100" value="55"><button aria-label="Zoom in"><mm-icon name="plus"></mm-icon></button></div>`);

/* ---------- task bar ---------- */
define('mm-taskbar', `<style>
:host{display:flex;align-items:center;height:40px;color:#fff;font-size:12px;line-height:17px;background:linear-gradient(90deg,#5a7f99 0,#50799a 17%,#3f7094 18%,#4b7899 21%,#4b7798 40%,#43718f 55%,#487796 62%,#3c6d90 66%,#47748f 72%,#4d7b9a 90%,#47748f)}
button{border:0;background:none;padding:0}
.start{margin:0 15px 0 9px}
.app{box-sizing:border-box;width:58px;height:38px;margin-right:4px;display:grid;place-items:center;border:1px solid #93acbc;background:#7595ab}
.app.on{background:linear-gradient(120deg,#a9bdca,#86a3b5);border-color:#f0f4f6}
.tray{margin-left:auto;display:flex;align-items:center;gap:10px;padding-right:25px}
time{text-align:center;font-size:11px;margin-left:7px}
.lang{margin-left:5px}
.up{margin-right:3px}
</style>
<button class="start" aria-label="Start"><mm-icon name="start"></mm-icon></button>
<button class="app" aria-label="Explorer"><mm-icon name="explorer"></mm-icon></button>
<button class="app" aria-label="Word"><mm-icon name="word"></mm-icon></button>
<button class="app on" aria-label="MindMaple"><mm-icon name="leaf"></mm-icon></button>
<div class="tray"><mm-icon class="up" name="up"></mm-icon><mm-icon name="shield"></mm-icon><mm-icon name="sound"></mm-icon><mm-icon name="battery"></mm-icon><span class="lang">РУС</span><time datetime="2014-11-05T14:31">14:31<br>05.11.2014</time></div>`);

/* ---------- window ---------- */
define('mm-app', `<style>
:host{display:flex;flex-direction:column;height:100vh}
header{background:linear-gradient(#5a93bb 0,#5a93bb 14px,#7fabca 26px,#c3d8e6 38px,#eff6fb 49px)}
main{flex:1;display:flex;min-height:0;background:linear-gradient(#a9bbd5,#c3d5ec 4px)}
mm-workspace{flex:1;margin:3px 4px 0 0}
mm-panel{width:260px;margin-top:3px}
</style>
<header><mm-title-bar></mm-title-bar><mm-tabs></mm-tabs></header>
<mm-ribbon>
<mm-group label="Clipboard"><mm-button off menu w="42" icon="paste" label="Paste"></mm-button><mm-button off w="42" icon="copy" label="Copy"></mm-button><mm-button off w="42" icon="cut" label="Cut"></mm-button><mm-button off menu w="48" icon="brush" label="Format|Painter"></mm-button></mm-group>
<mm-group label="Topics"><mm-button off menu w="42" icon="topic" label="Topic"></mm-button><mm-button w="50" icon="subtopic" label="Subtopic"></mm-button><mm-button w="50" icon="floating" label="Floating|Topic"></mm-button><mm-button off w="41" icon="callout" label="Callout"></mm-button></mm-group>
<mm-group label="Topic Elements"><mm-button menu w="70" icon="relationship" label="Relationship"></mm-button><mm-button off menu w="56" icon="boundary" label="Boundary"></mm-button><mm-button off menu w="48" icon="smiley" label="Icon|Marker"></mm-button><mm-button off menu w="42" icon="picture" label="Picture"></mm-button></mm-group>
<mm-group label="Layout"><mm-button menu w="60" icon="growth" label="Growth|Direction"></mm-button></mm-group>
<mm-group label="Edit"><mm-button w="42" icon="bigfind" label="Find"></mm-button><mm-button menu w="42" icon="select" label="Select"></mm-button><mm-button off menu w="42" icon="delete" label="Delete"></mm-button></mm-group>
</mm-ribbon>
<main><mm-workspace></mm-workspace><mm-panel></mm-panel></main>
<mm-status></mm-status>
<mm-taskbar></mm-taskbar>`);
</script>
</body>
</html>
